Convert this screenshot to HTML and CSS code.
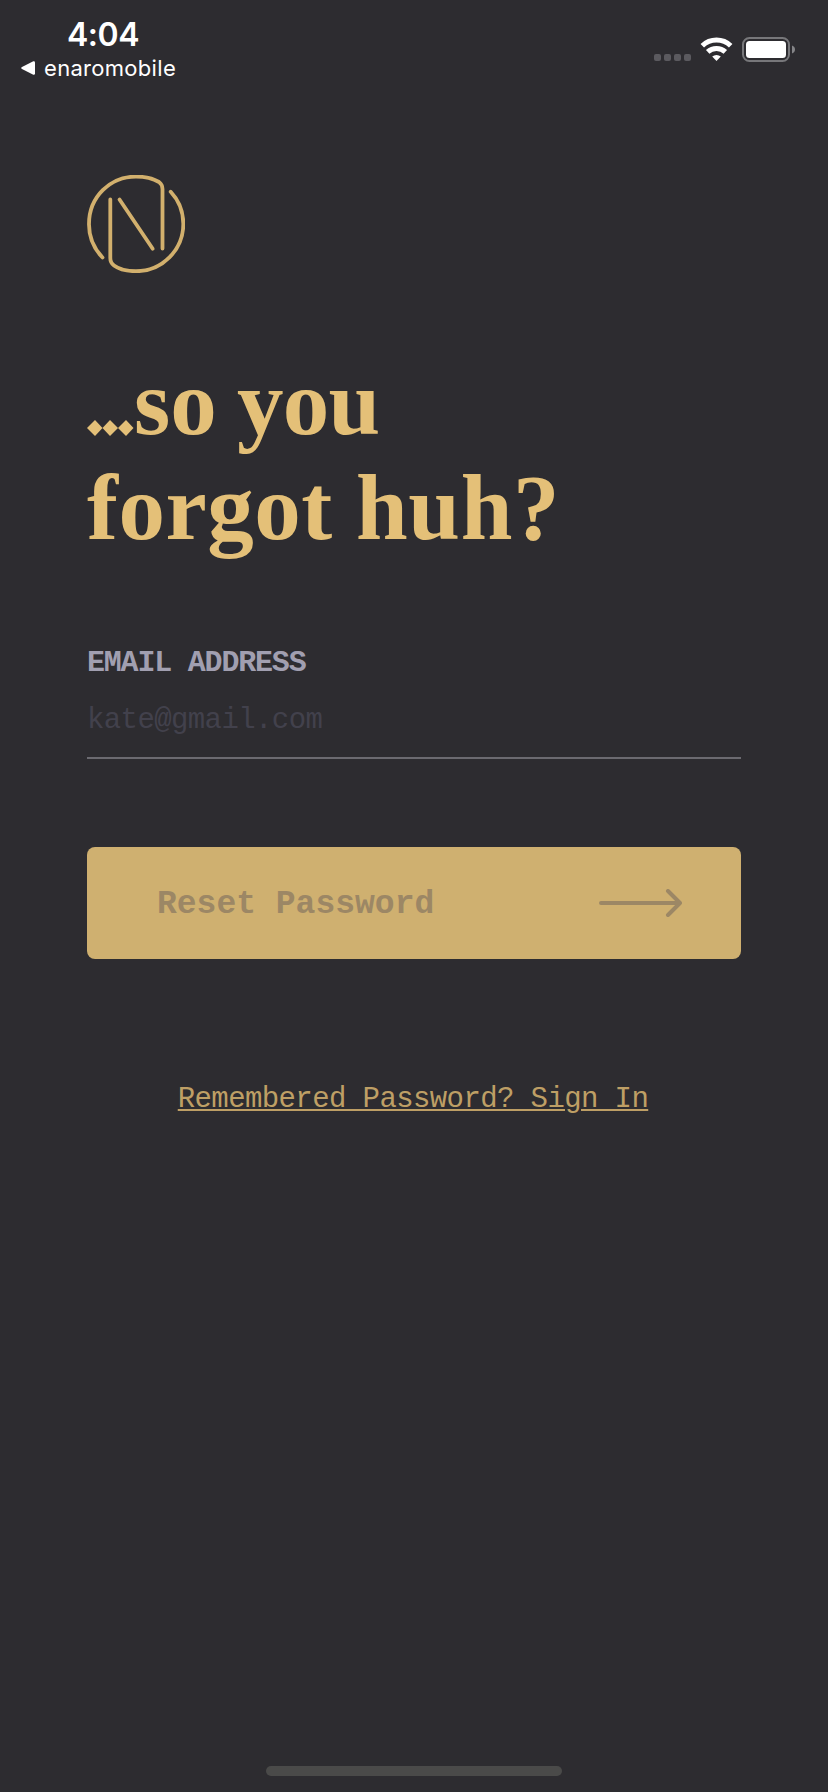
FILE: index.html
```html
<!DOCTYPE html>
<html lang="en">
<head>
<meta charset="utf-8">
<title>Forgot password</title>
<link rel="stylesheet" href="styles.css">
</head>
<body>
<div class="screen">
  <header class="status">
    <div class="status-left">
      <div class="time">4:04</div>
      <div class="back">
        <svg width="14" height="14" viewBox="0 0 14 14"><path d="M1 6.1 12.3.3Q14 0 14 1.5v11Q14 14 12.3 13.700L1 7.900Q-.6 7 1 6.100Z" fill="#fff"/></svg>
        <span>enaromobile</span>
      </div>
    </div>
    <svg class="status-icons" width="144" height="28" viewBox="650 35 144 28">
      <g fill="#5b5a5f"><rect x="653" y="54" width="7" height="7" rx="2"/><rect x="663" y="54" width="7" height="7" rx="2"/><rect x="673" y="54" width="7" height="7" rx="2"/><rect x="683" y="54" width="7" height="7" rx="2"/></g>
      <g fill="none" stroke="#fff" stroke-width="5"><path d="M701.300 45.800a20.500 20.500 0 0 1 28.400 0"/><path d="M706.700 51.900a12.800 12.800 0 0 1 17.600 0"/></g>
      <path d="M711.200 56.600a6.600 6.600 0 0 1 8.600 0L715.500 61Z" fill="#fff"/>
      <rect x="742" y="38" width="46" height="23" rx="6.500" fill="none" stroke="#77777a" stroke-width="2"/>
      <rect x="745" y="41" width="40" height="17" rx="3.500" fill="#fff"/>
      <path d="M791 45.500q3 1.200 3 4t-3 4Z" fill="#858588"/>
    </svg>
  </header>
  <main class="content">
    <svg class="logo" width="98" height="98" viewBox="87 175 98 98" fill="none" stroke="#d2b06d" stroke-width="3.800" stroke-linecap="round" stroke-linejoin="round">
      <path d="M102.500 257.500A47 47 0 0 1 89 224C89 197 110 176.600 136 176.600C146 176.600 154 179 159 182Q162.500 184.500 162.500 189V248.500"/>
      <path d="M170.700 191.700A47 47 0 0 1 183.300 224C183.300 250 162 271.200 136 271.200C126 271.200 118 268.500 114 265.500Q110.300 262.800 110.300 258V199.500"/>
      <path d="M119.500 199.500 152.700 248.700"/>
    </svg>
    <h1 class="title"><span class="line"><span class="dots">...<svg class="diamonds" width="47" height="16" viewBox="0 0 47 16" fill="#e4c078"><path d="M0 8 8 0 15.500 8 8 16ZM15.500 8 23 0 31 8 23 16ZM31 8 39 0 46.500 8 39 16Z"/></svg></span><span class="so">so</span> <span class="you">you</span></span><span class="line"><span class="forgot">forgot</span> <span class="huh">huh?</span></span></h1>
    <label class="label" for="email">EMAIL ADDRESS</label>
    <input class="field" id="email" type="email" placeholder="kate@gmail.com">
    <button class="submit" type="button">
      <span class="submit-text">Reset Password</span>
      <svg width="84" height="28" viewBox="0 0 84 28" fill="none" stroke="#9c8765" stroke-width="4" stroke-linecap="round" stroke-linejoin="round"><path d="M2 14H81M69 2 81 14 69 26"/></svg>
    </button>
    <a class="signin" href="#">Remembered Password? Sign In</a>
  </main>
  <div class="home"></div>
</div>
</body>
</html>
```
FILE: styles.css
```css
* { box-sizing: border-box; }
body { margin: 0; background: #2d2c30; }
.screen { width: 828px; height: 1792px; background: #2d2c30; display: flex; flex-direction: column; overflow: hidden; }
.status { height: 175px; display: flex; justify-content: space-between; padding: 15px 33px 0 21px; color: #fff; font-family: Inter, sans-serif; }
.status-left { width: 165px; }
.time { font-size: 32px; font-weight: 600; line-height: 40px; padding-left: 46px; letter-spacing: -0.5px; }
.back { display: flex; align-items: center; gap: 9px; font-size: 22px; line-height: 26px; letter-spacing: 0.3px; }
.status-icons { margin-top: 20px; }
.content { flex: 1; display: flex; flex-direction: column; padding: 0 87px; font-family: "Liberation Mono", monospace; }
.logo { display: block; }
.title { margin: 77px 0 0; font: bold 93px/105px "Liberation Serif", serif; color: #e4c078; }
.line { display: flex; }
.dots { position: relative; width: 47px; letter-spacing: -8px; color: transparent; }
.diamonds { position: absolute; left: 0; top: 70px; }
.so { width: 103px; }
.you { letter-spacing: -0.8px; }
.forgot { width: 269px; letter-spacing: 0.5px; }
.huh { letter-spacing: 0.6px; }
.label { margin-top: 87px; font-size: 30px; line-height: 32px; font-weight: bold; letter-spacing: -1.2px; color: #a19fb0; }
.field { margin-top: 10px; height: 70px; padding: 0 0 6px; border: 0; border-bottom: 2px solid #6b6a70; background: none; outline: 0; font: 29px "Liberation Mono", monospace; letter-spacing: -0.6px; color: #a19fb0; }
.field::placeholder { color: #42414c; opacity: 1; }
.submit { margin-top: 88px; height: 112px; border: 0; border-radius: 8px; padding: 0 58px 0 70px; background: #cfb070; color: #9c8765; display: flex; align-items: center; justify-content: space-between; font: bold 33px "Liberation Mono", monospace; }
.submit-text { padding-top: 3px; }
.signin { align-self: center; margin: 124px 2px 0 0; font-size: 29px; line-height: 34px; letter-spacing: -0.6px; color: #be9f65; text-decoration: underline; text-decoration-thickness: 2px; text-underline-offset: 2px; }
.home { width: 296px; height: 10px; margin: 0 auto 16px; border-radius: 5px; background: #4a4a49; }
```
